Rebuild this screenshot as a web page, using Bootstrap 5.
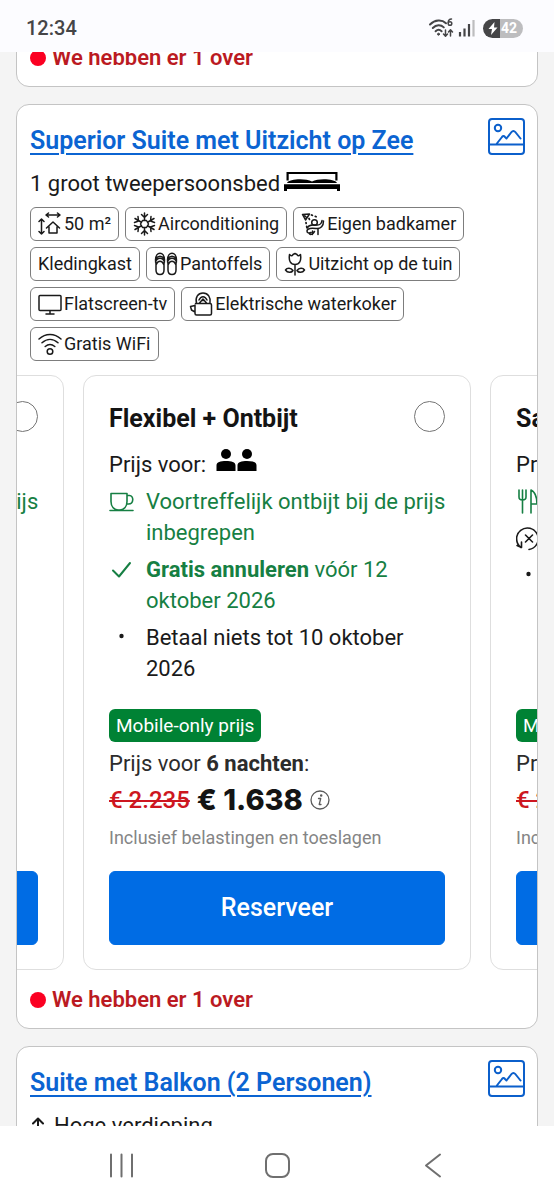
<!DOCTYPE html>
<html lang="nl">
<head>
<meta charset="utf-8">
<meta name="viewport" content="width=device-width, initial-scale=1">
<title>Kamers</title>
<link rel="stylesheet" href="https://cdn.jsdelivr.net/npm/bootstrap@5.3.0/dist/css/bootstrap.min.css">
<style>
  body { font-family: Roboto, "Liberation Sans", sans-serif; font-size: 22px; line-height: 31px; color: #1a1a1a; background: #f4f4f4; }
  svg { flex: none; }
  .line-icon { fill: none; stroke: currentColor; stroke-width: 2; stroke-linecap: round; stroke-linejoin: round; }

  /* system bars */
  .status-bar { height: 52px; padding: 4px 31px 0 26px; background: #fcfcff; color: #454547; font-size: 20px; font-weight: 500; }
  .battery { width: 40px; height: 19px; border-radius: 10px; background: linear-gradient(90deg, #454547 42%, #bdbdbf 42%); color: #fff; font-size: 14px; line-height: 19px; font-weight: 700; padding-left: 5px; padding-right: 6px; }
  .system-nav { height: 74px; background: #fff; padding: 4px 43px 0; color: #6f6f6f; }
  .system-nav button { color: inherit; }

  /* room cards */
  .rooms { gap: 17px; padding: 0 16px; }
  .rooms > :first-child { margin-top: -25px; }
  .room { flex: none; border: 1px solid #c4c4c4; border-radius: 13px; background: #fff; overflow: hidden; }
  .room-top { padding: 13px 12px 0 13px; }
  .room-title { font-size: 25px; line-height: 30px; font-weight: 600; margin: 8px 0 0; }
  .room-title a { color: #0b64d2; text-underline-offset: 4px; text-decoration-thickness: 2px; }
  .photo-btn { color: #0b5fcb; }
  .bed-line { padding: 0 13px; margin-top: 12px; height: 31px; }
  .facilities { gap: 6px; padding: 8px 13px 0; }
  .facility { height: 34px; border: 1px solid #7d7d7d; border-radius: 6px; padding: 0 7px; font-size: 18px; line-height: 32px; gap: 2px; }
  .facility svg { stroke-width: 1.5; }
  .stock { color: #bb1a22; font-weight: 600; padding: 14px 13px 13px; gap: 6px; }
  .stock-dot { width: 16px; height: 16px; border-radius: 50%; background: #fb0022; }

  /* rate cards */
  .offers { gap: 19px; margin-top: 14px; }
  .offer { flex: 0 0 calc(100% - 132px); border: 1px solid #dedede; border-radius: 13px; padding: 25px 25px 24px; }
  .offer h3 { font-size: 25px; line-height: 36px; font-weight: 700; margin: 0; color: #141414; }
  .offer .form-check-input { width: 31px; height: 31px; margin: 0; border: 1px solid #757575; }
  .offer ul { margin: 6px -6px 0 0; gap: 6px; }
  .offer li { gap: 12px; }
  .offer li svg { width: 25px; height: 31px; stroke-width: 1.6; }
  .guests { margin-top: 12px; gap: 10px; }
  .good { color: #167f43; }
  .rate-foot { padding-top: 25px; }
  .deal { background: #008234; color: #fff; border-radius: 6px; font-size: 19px; line-height: 33px; padding: 0 7px; }
  .nights { color: #2c2c2c; margin-top: 6px; }
  .price-row { margin-top: 2px; height: 38px; gap: 7px; color: #5a5a5a; }
  .price-row svg { stroke-width: 1.3; }
  .old-price { color: #cd1620; font-size: 24px; font-weight: 500; text-decoration-thickness: 2px; }
  .new-price { font: 800 29px/38px Inter, "Noto Sans", sans-serif; color: #141414; }
  .taxes { color: #858585; font-size: 18px; margin-top: 3px; }
  .reserve { height: 74px; margin-top: 18px; border-radius: 6px; font-size: 25px; font-weight: 500; --bs-btn-bg: #006ce4; --bs-btn-border-color: #006ce4; }
</style>
</head>
<body class="vh-100 d-flex flex-column overflow-hidden">

<svg class="d-none" aria-hidden="true">
  <symbol id="photo" viewBox="0 0 37 37"><rect x="1" y="1" width="35" height="35" rx="3"/><path d="M1 26.500h35M8.500 26l5.500-7c1-1.200 2-1.200 3 0l1.500 1.500 5-6.500c1.200-1.500 2.600-1.500 3.800 0l5.200 6.500"/><circle cx="10" cy="10" r="3.200"/></symbol>
  <symbol id="people" viewBox="0 0 41 23"><g fill="#000" stroke="none"><circle cx="10" cy="5" r="5"/><circle cx="31" cy="5" r="5"/><path d="M0.500 22v-5.500c0-3.500 4-4.500 9.500-4.500s9.500 1 9.500 4.500V22zM21.500 22v-5.500c0-3.500 4-4.500 9.500-4.500s9.500 1 9.500 4.500V22z"/></g></symbol>
  <symbol id="cup" viewBox="0 0 25 31"><path d="M2 7.500h16v8c0 5-3 8.500-8 8.500s-8-3.500-8-8.500zM18 9.500h2.500c4.500 0 4.500 8.500-1 8.500H18M1 24.500h23"/></symbol>
  <symbol id="check" viewBox="0 0 25 31"><path stroke-width="2" d="M4 16.500l6 6L21 9"/></symbol>
  <symbol id="bullet" viewBox="0 0 25 31"><circle cx="12.500" cy="14" r="2.200" fill="#1a1a1a" stroke="none"/></symbol>
  <symbol id="cutlery" viewBox="0 0 25 31"><path d="M3 4v7q0 3 3.500 3t3.500-3V4M6.500 4v23M15 27V4c4 2 6 6 6 14h-6"/></symbol>
  <symbol id="no-refund" viewBox="0 0 25 31"><path d="M5 24.500A10.800 10.800 0 1 1 13 26.500M1 22.500l4.500 2V19M9.500 12l7 7M16.500 12l-7 7"/></symbol>
  <symbol id="info" viewBox="0 0 20 20"><circle cx="10" cy="10" r="9"/><path d="M8.500 8.500h2.200L9.200 14.500H11"/><circle cx="11.200" cy="5.500" r=".6" fill="currentColor"/></symbol>
</svg>

<header class="status-bar flex-shrink-0 d-flex align-items-center justify-content-between">
  <span>12:34</span>
  <div class="d-flex align-items-center gap-1">
    <svg width="26" height="20" viewBox="0 0 26 20" class="line-icon" aria-label="Wifi">
      <path d="M2 6.500c5-5 12-5 16-1.200M4.800 10c3.500-3.500 8-3.500 11-.6M7.600 13.200c2-1.900 4-1.900 6 0"/><circle cx="10.500" cy="16.200" r="1" fill="currentColor" stroke-width="1"/>
      <path stroke-width="1.500" d="M23.500 1c-2 0-3.300 1.200-3.300 3.800M17.500 12v6M15.500 16l2 2.200 2-2.200M22.500 18v-6M20.500 14l2-2.200 2 2.200"/><circle cx="22" cy="5.500" r="1.800" stroke-width="1.500"/>
    </svg>
    <svg width="17" height="20" viewBox="0 0 17 20" fill="none" stroke="currentColor" stroke-width="2.200" aria-label="Signaal"><path d="M2 14v4.500M6.500 10.500v8M11 6v12.500"/><path stroke="#bdbdbf" d="M15.500 2v16.500"/></svg>
    <div class="battery d-flex align-items-center justify-content-between ms-1"><svg width="10" height="13" viewBox="0 0 10 13" fill="#fff"><path d="M6.500 0L.5 7H4l-1 6 6.500-7.500H6z"/></svg><span>42</span></div>
  </div>
</header>

<main class="rooms flex-grow-1 d-flex flex-column overflow-hidden">

  <article class="room">
    <div class="stock d-flex align-items-center"><span class="stock-dot"></span>We hebben er 1 over</div>
  </article>

  <article class="room">
    <div class="room-top d-flex justify-content-between align-items-start">
      <h2 class="room-title"><a href="#superior">Superior Suite met Uitzicht op Zee</a></h2>
      <button type="button" class="photo-btn btn p-0 border-0 lh-1" aria-label="Foto's"><svg width="37" height="37" class="line-icon d-block"><use href="#photo"/></svg></button>
    </div>
    <div class="bed-line d-flex gap-1">1 groot tweepersoonsbed
      <svg width="56" height="20" viewBox="0 0 56 20" class="mt-1" fill="#000" aria-hidden="true"><path d="M2.500 0h51v8.500h-2.200V2H4.700v6.500H2.500zM3 11c2-4 18-5 25-1.500C35 6 51 7 53 11zM0 12.200h56V19h-3v-2H3v2H0z"/></svg>
    </div>
    <div class="facilities d-flex flex-wrap">
      <span class="facility d-flex align-items-center"><svg width="24" height="24" viewBox="0 0 24 24" class="line-icon" aria-hidden="true"><path d="M8 3h14M10.500 1L8 3l2.500 2M19.500 1L22 3l-2.500 2M3.500 7v15M1 9.500L3.500 7 6 9.500M1 19.500L3.500 22 6 19.500M8.500 16l6.500-6 6.500 6M11 14.500V21h8v-6.500"/></svg>50 m²</span>
      <span class="facility d-flex align-items-center"><svg width="23" height="24" viewBox="0 0 22 24" class="line-icon" aria-hidden="true"><path d="M11 1v7M11 16v7M1.500 6.500l6 3.500M14.500 14l6 3.500M20.500 6.500l-6 3.500M7.500 14l-6 3.500M8 2.500l3 3 3-3M8 21.500l3-3 3 3M1 10.500L5 9 4.500 4.500M21 10.500L17 9l.5-4.500M1 13.500L5 15l-.5 4.500M21 13.500L17 15l.5 4.500M9 8.500L7 12l2 3.500h4l2-3.500-2-3.500z"/></svg>Airconditioning</span>
      <span class="facility d-flex align-items-center"><svg width="24" height="24" viewBox="0 0 24 24" class="line-icon" aria-hidden="true"><path d="M1.500 2.500l3 5.500L8.500 2zM3 3l2 2"/><path stroke-width="1.700" stroke-dasharray="1 3" d="M10.500 3l7 2.500M5 10.500l1 6M8 6.500l1.500 3"/><circle cx="13.500" cy="10.500" r="2.800"/><path d="M22.500 9c0 5-2.500 8-7.500 7.500-4-.5-9-.5-9 2.500 0 2 2 2.500 4 1.500M21 8.500c-.5 3-2 4.500-4.500 4.500h-5c-3 0-4.500 1.500-5.500 3M11.500 19v3.500M17 17v5.500M8.500 22c1.500 1 3.500 0 5-2.500"/></svg>Eigen badkamer</span>
      <span class="facility d-flex align-items-center">Kledingkast</span>
      <span class="facility d-flex align-items-center"><svg width="24" height="24" viewBox="0 0 24 24" class="line-icon" aria-hidden="true"><path d="M1.500 8c0-9 9-9 9 0l-.5 4v6c0 6-8 6-8 0v-6zM13.500 8c0-9 9-9 9 0l-.5 4v6c0 6-8 6-8 0v-6zM1.500 10c2-5 7-5 9 0M2 13c2-5 6-5 8 0M2 6.500c2-3 6-3 8 0M13.500 10c2-5 7-5 9 0M14 13c2-5 6-5 8 0M14 6.500c2-3 6-3 8 0"/></svg>Pantoffels</span>
      <span class="facility d-flex align-items-center"><svg width="22" height="24" viewBox="0 0 22 24" class="line-icon" aria-hidden="true"><path d="M5.500 2.500c2 2 3 1.500 3.500 0L11 1.500l2 1c.5 1.500 1.500 2 3.500 0C17.500 9 15.500 12.500 11 12.500S4.500 9 5.500 2.500zM11 12.500V23M9 18.500c-2-3-6-3-7.500-.5 2 3 6 3 7.500.5zM13 18.500c2-3 6-3 7.500-.5-2 3-6 3-7.500.5z"/></svg>Uitzicht op de tuin</span>
      <span class="facility d-flex align-items-center"><svg width="24" height="24" viewBox="0 0 24 24" class="line-icon" aria-hidden="true"><path d="M2 3.500h20c.6 0 1 .4 1 1v13c0 .6-.4 1-1 1H2c-.6 0-1-.4-1-1v-13c0-.6.4-1 1-1zM12 18.500v3.500M8 22h8"/></svg>Flatscreen-tv</span>
      <span class="facility d-flex align-items-center"><svg width="24" height="24" viewBox="0 0 24 24" class="line-icon" aria-hidden="true"><path d="M6.500 11.500H21c1 0 1.500.5 1.500 1.500v8.500c0 1-.5 1.500-1.500 1.500H7.500c-1 0-1.500-.5-1.500-1.500V13M6 13.500l-4.500 1 1 3.500L6 20M7.500 11C6 5.500 9 1 14 1s8 4.500 7 10M10 8c2-4.500 6-4.500 8 0M10.500 11l3.500-4 3.500 4M13 8.500h2"/></svg>Elektrische waterkoker</span>
      <span class="facility d-flex align-items-center"><svg width="24" height="24" viewBox="0 0 24 24" class="line-icon" aria-hidden="true"><path d="M1 7c6.500-6 15.500-6 22 0M4 10.800c5-4.500 11-4.500 16 0M7.200 14.500c3-2.600 6.600-2.600 9.600 0"/><circle cx="12" cy="19.500" r="2.800"/></svg>Gratis WiFi</span>
    </div>

    <div class="offers d-flex justify-content-center">
      <section class="offer d-flex flex-column">
        <div class="d-flex justify-content-between align-items-start"><h3><label for="rate1">Flexibel + Ontbijt</label></h3><input class="form-check-input" type="radio" name="rate" id="rate1"></div>
        <div class="guests d-flex"><span>Prijs voor:</span><svg width="41" height="23"><use href="#people"/></svg></div>
        <ul class="list-unstyled d-flex flex-column">
          <li class="d-flex good"><svg class="line-icon"><use href="#cup"/></svg><span>Voortreffelijk ontbijt bij de prijs inbegrepen</span></li>
        </ul>
        <div class="mt-auto">
          <button type="button" class="reserve btn btn-primary w-100">Reserveer</button>
        </div>
      </section>

      <section class="offer d-flex flex-column">
        <div class="d-flex justify-content-between align-items-start"><h3><label for="rate2">Flexibel + Ontbijt</label></h3><input class="form-check-input" type="radio" name="rate" id="rate2"></div>
        <div class="guests d-flex"><span>Prijs voor:</span><svg width="41" height="23"><use href="#people"/></svg></div>
        <ul class="list-unstyled d-flex flex-column">
          <li class="d-flex good"><svg class="line-icon"><use href="#cup"/></svg><span>Voortreffelijk ontbijt bij de prijs inbegrepen</span></li>
          <li class="d-flex good"><svg class="line-icon"><use href="#check"/></svg><span><b>Gratis annuleren</b> vóór 12 oktober 2026</span></li>
          <li class="d-flex"><svg class="line-icon"><use href="#bullet"/></svg><span>Betaal niets tot 10 oktober 2026</span></li>
        </ul>
        <div class="rate-foot mt-auto">
          <span class="deal d-inline-block align-top">Mobile-only prijs</span>
          <div class="nights">Prijs voor <b>6 nachten</b>:</div>
          <div class="price-row d-flex align-items-center"><s class="old-price">€ 2.235</s><span class="new-price">€ 1.638</span><svg width="20" height="20" class="line-icon"><use href="#info"/></svg></div>
          <div class="taxes">Inclusief belastingen en toeslagen</div>
          <button type="button" class="reserve btn btn-primary w-100">Reserveer</button>
        </div>
      </section>

      <section class="offer d-flex flex-column">
        <div class="d-flex justify-content-between align-items-start"><h3><label for="rate3">Samen</label></h3><input class="form-check-input" type="radio" name="rate" id="rate3"></div>
        <div class="guests d-flex"><span>Prijs voor:</span><svg width="41" height="23"><use href="#people"/></svg></div>
        <ul class="list-unstyled d-flex flex-column">
          <li class="d-flex good"><svg class="line-icon"><use href="#cutlery"/></svg></li>
          <li class="d-flex"><svg class="line-icon"><use href="#no-refund"/></svg></li>
          <li class="d-flex"><svg class="line-icon"><use href="#bullet"/></svg></li>
        </ul>
        <div class="rate-foot mt-auto">
          <span class="deal d-inline-block align-top">Mobile-only prijs</span>
          <div class="nights">Prijs voor <b>6 nachten</b>:</div>
          <div class="price-row d-flex align-items-center"><s class="old-price">€ 2.235</s></div>
          <div class="taxes">Inclusief belastingen en toeslagen</div>
          <button type="button" class="reserve btn btn-primary w-100">Reserveer</button>
        </div>
      </section>
    </div>

    <div class="stock d-flex align-items-center"><span class="stock-dot"></span>We hebben er 1 over</div>
  </article>

  <article class="room">
    <div class="room-top d-flex justify-content-between align-items-start">
      <h2 class="room-title"><a href="#balkon">Suite met Balkon (2 Personen)</a></h2>
      <button type="button" class="photo-btn btn p-0 border-0 lh-1" aria-label="Foto's"><svg width="37" height="37" class="line-icon d-block"><use href="#photo"/></svg></button>
    </div>
    <div class="bed-line d-flex gap-2"><svg width="16" height="31" viewBox="0 0 16 31" class="line-icon"><path d="M8 24V8.500M3 13.500l5-5 5 5"/></svg>Hoge verdieping</div>
  </article>
</main>

<nav class="system-nav flex-shrink-0 d-flex align-items-center justify-content-around" aria-label="Systeem">
  <button type="button" class="btn p-0 border-0" aria-label="Recent"><svg width="25" height="25" viewBox="0 0 25 25" class="line-icon"><path d="M2 1.500v22M12.500 1.500v22M23 1.500v22"/></svg></button>
  <button type="button" class="btn p-0 border-0" aria-label="Start"><svg width="25" height="25" viewBox="0 0 25 25" class="line-icon"><rect x="1" y="1" width="23" height="23" rx="7"/></svg></button>
  <button type="button" class="btn p-0 border-0" aria-label="Terug"><svg width="25" height="25" viewBox="0 0 25 25" class="line-icon"><path d="M19 1.500L5 12.500l14 11"/></svg></button>
</nav>

<script src="https://cdn.jsdelivr.net/npm/bootstrap@5.3.0/dist/js/bootstrap.bundle.min.js"></script>
</body>
</html>
